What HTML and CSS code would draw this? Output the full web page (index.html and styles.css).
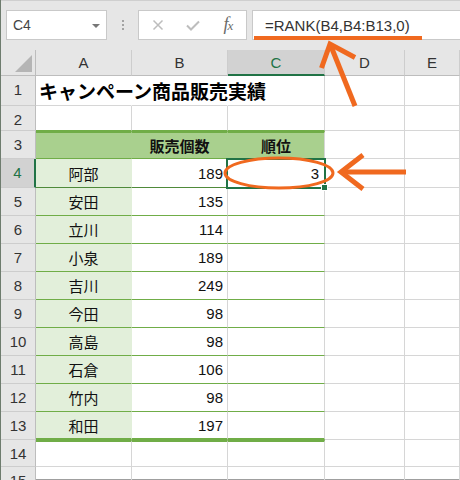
FILE: index.html
```html
<!DOCTYPE html>
<html lang="ja">
<head>
<meta charset="utf-8">
<title>RANK</title>
<link rel="stylesheet" href="styles.css">
</head>
<body>
<div class="app">
  <div class="topbar">
    <div class="namebox"><span>C4</span><span class="caret"></span></div>
    <div class="grip"><i></i><i></i><i></i></div>
    <div class="fxbox">
      <span class="fxi w1"><svg width="12" height="12" viewBox="0 0 12 12"><path d="M1.5 1.5 L10.5 10.5 M10.5 1.5 L1.5 10.5" stroke="#bdbdbd" stroke-width="1.5" fill="none"/></svg></span>
      <span class="fxi w2"><svg width="14" height="11" viewBox="0 0 14 11"><path d="M1 5.5 L5 9.5 L13 1.5" stroke="#bdbdbd" stroke-width="2" fill="none"/></svg></span>
      <span class="fxi w3"><span class="fx">f<small>x</small></span></span>
    </div>
    <div class="formula">=RANK(B4,B4:B13,0)</div>
  </div>

  <div class="sheet">
    <div class="corner"><span class="tri"></span></div>
    <div class="ch">A</div><div class="ch">B</div><div class="ch sel">C</div><div class="ch">D</div><div class="ch">E</div>

    <div class="rh">1</div>
    <div class="c nr title">キャンペーン商品販売実績</div><div class="c nr"></div><div class="c"></div><div class="c"></div><div class="c"></div>

    <div class="rh">2</div>
    <div class="c gtop"></div><div class="c gtop"></div><div class="c gtop"></div><div class="c"></div><div class="c"></div>

    <div class="rh">3</div>
    <div class="c th tha"></div><div class="c th tha">販売個数</div><div class="c th">順位</div><div class="c"></div><div class="c"></div>

    <div class="rh rsel">4</div>
    <div class="c tn t4">阿部</div><div class="c tv t4">189</div><div class="c tr cur">3</div><div class="c"></div><div class="c"></div>

    <div class="rh">5</div>
    <div class="c tn">安田</div><div class="c tv">135</div><div class="c tr"></div><div class="c"></div><div class="c"></div>

    <div class="rh">6</div>
    <div class="c tn">立川</div><div class="c tv">114</div><div class="c tr"></div><div class="c"></div><div class="c"></div>

    <div class="rh">7</div>
    <div class="c tn">小泉</div><div class="c tv">189</div><div class="c tr"></div><div class="c"></div><div class="c"></div>

    <div class="rh">8</div>
    <div class="c tn">吉川</div><div class="c tv">249</div><div class="c tr"></div><div class="c"></div><div class="c"></div>

    <div class="rh">9</div>
    <div class="c tn">今田</div><div class="c tv">98</div><div class="c tr"></div><div class="c"></div><div class="c"></div>

    <div class="rh">10</div>
    <div class="c tn">高島</div><div class="c tv">98</div><div class="c tr"></div><div class="c"></div><div class="c"></div>

    <div class="rh">11</div>
    <div class="c tn">石倉</div><div class="c tv">106</div><div class="c tr"></div><div class="c"></div><div class="c"></div>

    <div class="rh">12</div>
    <div class="c tn">竹内</div><div class="c tv">98</div><div class="c tr"></div><div class="c"></div><div class="c"></div>

    <div class="rh">13</div>
    <div class="c tn last">和田</div><div class="c tv last">197</div><div class="c tr last"></div><div class="c"></div><div class="c"></div>

    <div class="rh">14</div>
    <div class="c gafter"></div><div class="c gafter"></div><div class="c gafter"></div><div class="c"></div><div class="c"></div>

    <div class="rh">15</div>
    <div class="c"></div><div class="c"></div><div class="c"></div><div class="c"></div><div class="c"></div>
  </div>

  <svg class="marks" width="460" height="480" viewBox="0 0 460 480">
    <rect x="254" y="36" width="168" height="4" fill="#f0691f"/>
    <path d="M355 106 L330.5 45" stroke="#f0691f" stroke-width="5" fill="none"/>
    <path d="M321.5 68 L330 44 L355 57.5" stroke="#f0691f" stroke-width="5" fill="none" stroke-linejoin="miter"/>
    <ellipse cx="279" cy="173" rx="54" ry="15" stroke="#f0691f" stroke-width="3" fill="none"/>
    <path d="M406 172 L343 172" stroke="#f0691f" stroke-width="5" fill="none"/>
    <path d="M363 155 L341 172 L363 189" stroke="#f0691f" stroke-width="5" fill="none" stroke-linejoin="miter"/>
  </svg>
</div>
</body>
</html>
```
FILE: styles.css
```css
html, body {
  margin: 0;
  padding: 0;
  background: #ffffff;
}

.app {
  position: relative;
  width: 459px;
  height: 480px;
  overflow: hidden;
  border-left: 1px solid #6e7c6e;
  background: #ffffff;
  font-family: "Liberation Sans", "Noto Sans CJK JP", sans-serif;
  font-size: 15px;
  color: #222;
}

/* ---------- formula bar ---------- */
.topbar {
  height: 50px;
  box-sizing: border-box;
  background: #e6e6e6;
  border-top: 1px solid #cfcfcf;
  display: flex;
  align-items: flex-start;
  padding: 9px 0 0 5px;
}

.namebox {
  width: 101px;
  height: 30px;
  box-sizing: border-box;
  background: #fff;
  border: 1px solid #c9c9c9;
  display: flex;
  align-items: center;
  justify-content: space-between;
  padding: 0 6px 0 6px;
  font-size: 14px;
  color: #444;
}

.caret {
  width: 0;
  height: 0;
  border-left: 4px solid transparent;
  border-right: 4px solid transparent;
  border-top: 4px solid #777;
  margin-top: 1px;
}

.grip {
  width: 31px;
  height: 30px;
  display: flex;
  flex-direction: column;
  align-items: center;
  justify-content: center;
  gap: 2px;
}

.grip i {
  display: block;
  width: 2px;
  height: 2px;
  background: #a3a3a3;
}

.fxbox {
  width: 109px;
  height: 30px;
  box-sizing: border-box;
  background: #fff;
  border: 1px solid #c9c9c9;
  display: flex;
  align-items: center;
}

.fxi {
  display: flex;
  align-items: center;
  justify-content: center;
  height: 28px;
}
.w1 { width: 37px; }
.w2 { width: 34px; }
.w3 { flex: 1; }

.fx {
  font-family: "Liberation Serif", serif;
  font-style: italic;
  font-size: 18px;
  color: #6a6a6a;
  letter-spacing: -1px;
  margin-top: -2px;
}
.fx small {
  font-size: 13px;
}

.formula {
  flex: 1;
  height: 30px;
  box-sizing: border-box;
  margin-left: 5px;
  margin-right: -6px;
  background: #fff;
  border: 1px solid #c9c9c9;
  display: flex;
  align-items: center;
  padding-left: 12px;
  font-size: 15px;
  color: #333;
}

/* ---------- sheet ---------- */
.sheet {
  display: grid;
  grid-template-columns: 35px 96px 96px 97px 80px 1fr;
  grid-template-rows: 26px 30px 25px 28px 29px repeat(9, 28px) 27px 1fr;
  height: 430px;
  border-bottom: 1px solid #9f9f9f;
  box-sizing: border-box;
}

.sheet > div {
  box-sizing: border-box;
  display: flex;
  align-items: center;
  white-space: nowrap;
  min-width: 0;
}

.corner {
  background: #e6e6e6;
  border-right: 1px solid #bdbdbd;
  border-bottom: 1px solid #bdbdbd;
  position: relative;
}
.tri {
  position: absolute;
  right: 3px;
  bottom: 3px;
  width: 0;
  height: 0;
  border-left: 17px solid transparent;
  border-bottom: 17px solid #b5b5b5;
}

.ch {
  background: #e6e6e6;
  border-right: 1px solid #cdcdcd;
  border-bottom: 1px solid #bdbdbd;
  justify-content: center;
  color: #333;
  font-size: 15px;
}
.ch.sel {
  background: #d2d2d2;
  border-bottom: 2px solid #217346;
  color: #217346;
}

.rh {
  background: #e6e6e6;
  border-right: 1px solid #bdbdbd;
  border-bottom: 1px solid #cdcdcd;
  justify-content: center;
  align-items: flex-start;
  padding-top: 5px;
  color: #333;
  font-size: 15px;
}
.sheet > .rh {
  align-items: flex-start;
  padding-top: 5px;
}
.rh.rsel {
  background: #d2d2d2;
  border-right: 2px solid #217346;
  color: #217346;
}

.c {
  border-right: 1px solid #d6d6d6;
  border-bottom: 1px solid #d6d6d6;
  padding: 0 4px;
}
.c.nr {
  border-right-color: transparent;
}

.title {
  font-family: "Noto Sans CJK JP", sans-serif;
  font-weight: bold;
  font-size: 19px;
  color: #000;
  overflow: visible;
  padding-left: 3px;
}

.gtop {
  border-bottom-color: #70ad47;
}

.th {
  background: #a9d08e;
  border-top: 2px solid #70ad47;
  border-bottom: 1px solid #70ad47;
  justify-content: center;
  font-family: "Noto Sans CJK JP", sans-serif;
  font-weight: bold;
  font-size: 15px;
  color: #111;
}
.th.tha {
  border-right-color: #a9d08e;
}

.tn {
  background: #e2efda;
  border-right-color: #e2efda;
  border-bottom: 1px solid #70ad47;
  justify-content: center;
  font-family: "Noto Sans CJK JP", sans-serif;
  color: #111;
}
.tv {
  border-bottom: 1px solid #70ad47;
  justify-content: flex-end;
  color: #111;
}
.c.t4 {
  border-bottom-color: #4f8a3a;
}
.tr {
  border-bottom: 1px solid #70ad47;
  justify-content: flex-end;
  color: #111;
  padding-right: 5px;
}
.c.last {
  border-bottom: 2px solid #70ad47;
}
.gafter {
  border-top: 2px solid #70ad47;
}

.cur {
  position: relative;
}
.cur::after {
  content: "";
  position: absolute;
  left: -2px;
  top: -1px;
  right: -2px;
  bottom: -2px;
  border: 2px solid #217346;
}
.cur::before {
  content: "";
  position: absolute;
  right: -4px;
  bottom: -4px;
  width: 5px;
  height: 5px;
  background: #217346;
  border: 1px solid #fff;
  z-index: 1;
}

.marks {
  position: absolute;
  left: -1px;
  top: 0;
  pointer-events: none;
}
```
